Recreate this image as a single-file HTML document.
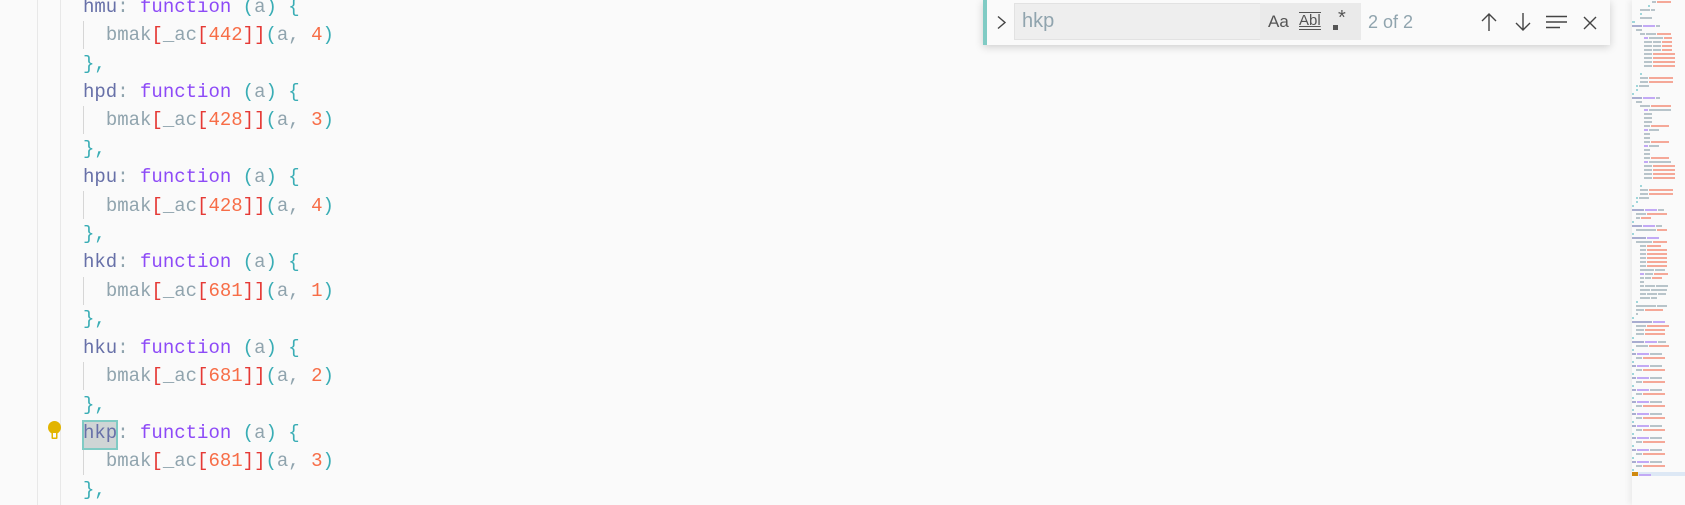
<!DOCTYPE html>
<html><head><meta charset="utf-8"><style>
html,body{margin:0;padding:0;width:1685px;height:505px;overflow:hidden;background:#fafafa;}
body{position:relative;font-family:"Liberation Mono","DejaVu Sans Mono",monospace;}
.code{position:absolute;left:83px;top:-7.2px;font-size:19px;line-height:28.4px;white-space:pre;color:#90a4ae;letter-spacing:0px;}
.id{color:#6770a8}.kw{color:#8d4af7}.p{color:#39adb5}.r{color:#e53935}.n{color:#f76d47}.g{color:#90a4ae}
.gl{position:absolute;left:37px;top:0;width:1px;height:505px;background:#e8e8e8}
.gl2{position:absolute;left:60px;top:0;width:1px;height:505px;background:#e8e8e8}
.guide{position:absolute;left:83px;width:1px;background:#d6d6d6;height:28px}
.sel{position:absolute;left:83px;top:420px;width:32px;height:26px;background:#cfd5d5;border:2px solid #80cbc4;box-sizing:content-box;margin-left:-1px}
.find{position:absolute;left:983px;top:0;width:627px;height:45px;background:#fafafa;box-shadow:0 2px 8px rgba(0,0,0,0.18);border-left:4px solid #80cbc4;box-sizing:border-box;font-family:"Liberation Sans","DejaVu Sans",sans-serif}
.inp{position:absolute;left:27px;top:3px;width:347px;height:37px;background:#eeeeee;border:1px solid #e2e2e2;box-sizing:border-box}
.mm{position:absolute;left:1632px;top:0;width:53px;height:505px;background:#fafafa;box-shadow:-3px 0 6px rgba(0,0,0,0.06);overflow:hidden}
.mm div{height:4px;position:relative;white-space:nowrap;font-size:0}
.mm i{display:inline-block;height:2px;margin-top:1px;margin-right:1px}
.a{background:#b8c4ca}.b{background:#c2a9f5}.c{background:#f5a898}.d{background:#9fd6da}.e{background:#a9add0}
</style></head><body>
<div class="gl"></div><div class="gl2"></div>
<div class="guide" style="top:21px"></div>
<div class="guide" style="top:106px"></div>
<div class="guide" style="top:191px"></div>
<div class="guide" style="top:277px"></div>
<div class="guide" style="top:362px"></div>
<div class="guide" style="top:447px"></div>
<div class="sel"></div>
<svg style="position:absolute;left:47px;top:421px" width="15" height="20" viewBox="0 0 15 20"><circle cx="7.5" cy="6.5" r="6.5" fill="#e2b400"/><rect x="4.5" y="10" width="6" height="8" rx="1" fill="#e2b400"/><rect x="6" y="12" width="3" height="4.5" fill="#fafafa"/></svg>
<div class="code"><span class="id">hmu</span><span class="g">:</span> <span class="kw">function</span> <span class="p">(</span><span class="g">a</span><span class="p">)</span> <span class="p">{</span>
  <span class="g">bmak</span><span class="r">[</span><span class="g">_ac</span><span class="r">[</span><span class="n">442</span><span class="r">]]</span><span class="p">(</span><span class="g">a,</span> <span class="n">4</span><span class="p">)</span>
<span class="p">},</span>
<span class="id">hpd</span><span class="g">:</span> <span class="kw">function</span> <span class="p">(</span><span class="g">a</span><span class="p">)</span> <span class="p">{</span>
  <span class="g">bmak</span><span class="r">[</span><span class="g">_ac</span><span class="r">[</span><span class="n">428</span><span class="r">]]</span><span class="p">(</span><span class="g">a,</span> <span class="n">3</span><span class="p">)</span>
<span class="p">},</span>
<span class="id">hpu</span><span class="g">:</span> <span class="kw">function</span> <span class="p">(</span><span class="g">a</span><span class="p">)</span> <span class="p">{</span>
  <span class="g">bmak</span><span class="r">[</span><span class="g">_ac</span><span class="r">[</span><span class="n">428</span><span class="r">]]</span><span class="p">(</span><span class="g">a,</span> <span class="n">4</span><span class="p">)</span>
<span class="p">},</span>
<span class="id">hkd</span><span class="g">:</span> <span class="kw">function</span> <span class="p">(</span><span class="g">a</span><span class="p">)</span> <span class="p">{</span>
  <span class="g">bmak</span><span class="r">[</span><span class="g">_ac</span><span class="r">[</span><span class="n">681</span><span class="r">]]</span><span class="p">(</span><span class="g">a,</span> <span class="n">1</span><span class="p">)</span>
<span class="p">},</span>
<span class="id">hku</span><span class="g">:</span> <span class="kw">function</span> <span class="p">(</span><span class="g">a</span><span class="p">)</span> <span class="p">{</span>
  <span class="g">bmak</span><span class="r">[</span><span class="g">_ac</span><span class="r">[</span><span class="n">681</span><span class="r">]]</span><span class="p">(</span><span class="g">a,</span> <span class="n">2</span><span class="p">)</span>
<span class="p">},</span>
<span class="id">hkp</span><span class="g">:</span> <span class="kw">function</span> <span class="p">(</span><span class="g">a</span><span class="p">)</span> <span class="p">{</span>
  <span class="g">bmak</span><span class="r">[</span><span class="g">_ac</span><span class="r">[</span><span class="n">681</span><span class="r">]]</span><span class="p">(</span><span class="g">a,</span> <span class="n">3</span><span class="p">)</span>
<span class="p">},</span></div>

<div class="find">
<svg style="position:absolute;left:9px;top:15px" width="12" height="15" viewBox="0 0 12 15"><path d="M2 1.5 L9 7.5 L2 13.5" fill="none" stroke="#444" stroke-width="1.4"/></svg>
<div class="inp">
<div style="position:absolute;left:7px;top:6px;font-size:20px;color:#90a4ae">hkp</div>
<div style="position:absolute;left:245px;top:-1px;width:101px;height:37px;background:#eaeaea"></div>
<div style="position:absolute;left:253px;top:8px;font-size:17px;color:#555">Aa</div>
<div style="position:absolute;left:284px;top:8px;font-size:15px;color:#555;border-top:1.5px solid #555;border-bottom:1.5px solid #555;line-height:16px;text-decoration:underline">Abl</div>
<div style="position:absolute;left:318px;top:21px;width:5px;height:5px;background:#555"></div>
<div style="position:absolute;left:323px;top:3px;font-size:20px;color:#555">*</div>
</div>
<div style="position:absolute;left:381px;top:12px;font-size:18px;color:#90a4ae">2 of 2</div>
<svg style="position:absolute;left:492px;top:12px" width="20" height="20" viewBox="0 0 20 20"><path d="M10 19 V2 M3 9 L10 2 L17 9" fill="none" stroke="#444" stroke-width="1.4"/></svg>
<svg style="position:absolute;left:526px;top:12px" width="20" height="20" viewBox="0 0 20 20"><path d="M10 1 V18 M3 11 L10 18 L17 11" fill="none" stroke="#444" stroke-width="1.4"/></svg>
<svg style="position:absolute;left:558px;top:14px" width="24" height="16" viewBox="0 0 24 16"><path d="M1 2.5 H22 M1 8 H22 M1 13.5 H15" fill="none" stroke="#444" stroke-width="1.4"/></svg>
<svg style="position:absolute;left:596px;top:16px" width="14" height="14" viewBox="0 0 14 14"><path d="M1 1 L13 13 M13 1 L1 13" fill="none" stroke="#444" stroke-width="1.4"/></svg>
</div>

<div class="mm">
<div><i class="a" style="width:4px;margin-left:20px"></i><i class="c" style="width:14px"></i></div>
<div><i class="d" style="width:2px;margin-left:16px"></i></div>
<div><i class="a" style="width:10px;margin-left:8px"></i><i class="a" style="width:4px"></i></div>
<div><i class="d" style="width:2px;margin-left:8px"></i></div>
<div><i class="a" style="width:12px;margin-left:8px"></i></div>
<div><i class="d" style="width:3px;margin-left:0px"></i></div>
<div><i class="e" style="width:10px"></i><i class="b" style="width:12px"></i><i class="a" style="width:4px"></i></div>
<div><i class="a" style="width:6px;margin-left:4px"></i></div>
<div><i class="a" style="width:5px;margin-left:8px"></i><i class="a" style="width:10px"></i><i class="c" style="width:14px"></i></div>
<div><i class="b" style="width:4px;margin-left:12px"></i><i class="a" style="width:14px"></i><i class="c" style="width:8px"></i></div>
<div><i class="a" style="width:8px;margin-left:12px"></i><i class="a" style="width:8px"></i><i class="c" style="width:10px"></i></div>
<div><i class="a" style="width:8px;margin-left:12px"></i><i class="a" style="width:8px"></i><i class="c" style="width:10px"></i></div>
<div><i class="a" style="width:8px;margin-left:12px"></i><i class="a" style="width:8px"></i><i class="c" style="width:10px"></i></div>
<div><i class="a" style="width:8px;margin-left:12px"></i><i class="c" style="width:22px"></i></div>
<div><i class="a" style="width:8px;margin-left:12px"></i><i class="c" style="width:22px"></i></div>
<div><i class="a" style="width:8px;margin-left:12px"></i><i class="c" style="width:22px"></i></div>
<div><i class="a" style="width:8px;margin-left:12px"></i><i class="c" style="width:22px"></i></div>
<div></div>
<div><i class="d" style="width:2px;margin-left:8px"></i></div>
<div><i class="a" style="width:8px;margin-left:8px"></i><i class="c" style="width:24px"></i></div>
<div><i class="a" style="width:8px;margin-left:8px"></i><i class="c" style="width:24px"></i></div>
<div><i class="d" style="width:2px;margin-left:4px"></i><i class="a" style="width:10px"></i></div>
<div><i class="d" style="width:2px;margin-left:4px"></i></div>
<div><i class="d" style="width:2px"></i></div>
<div><i class="e" style="width:10px"></i><i class="b" style="width:12px"></i><i class="a" style="width:4px"></i></div>
<div><i class="a" style="width:6px;margin-left:4px"></i></div>
<div><i class="a" style="width:10px;margin-left:8px"></i><i class="c" style="width:20px"></i></div>
<div><i class="b" style="width:4px;margin-left:12px"></i><i class="a" style="width:22px"></i></div>
<div><i class="a" style="width:8px;margin-left:12px"></i></div>
<div><i class="a" style="width:8px;margin-left:12px"></i></div>
<div><i class="a" style="width:8px;margin-left:12px"></i></div>
<div><i class="a" style="width:6px;margin-left:12px"></i><i class="c" style="width:18px"></i></div>
<div><i class="b" style="width:4px;margin-left:12px"></i><i class="a" style="width:10px"></i></div>
<div><i class="a" style="width:6px;margin-left:12px"></i></div>
<div><i class="a" style="width:6px;margin-left:12px"></i></div>
<div><i class="a" style="width:6px;margin-left:12px"></i><i class="c" style="width:18px"></i></div>
<div><i class="b" style="width:4px;margin-left:12px"></i><i class="a" style="width:10px"></i></div>
<div><i class="a" style="width:6px;margin-left:12px"></i></div>
<div><i class="a" style="width:6px;margin-left:12px"></i></div>
<div><i class="a" style="width:6px;margin-left:12px"></i><i class="c" style="width:18px"></i></div>
<div><i class="b" style="width:4px;margin-left:12px"></i><i class="a" style="width:22px"></i></div>
<div><i class="a" style="width:8px;margin-left:12px"></i><i class="c" style="width:22px"></i></div>
<div><i class="a" style="width:8px;margin-left:12px"></i><i class="c" style="width:22px"></i></div>
<div><i class="a" style="width:8px;margin-left:12px"></i><i class="c" style="width:22px"></i></div>
<div><i class="a" style="width:8px;margin-left:12px"></i><i class="c" style="width:22px"></i></div>
<div></div>
<div><i class="d" style="width:2px;margin-left:8px"></i></div>
<div><i class="a" style="width:8px;margin-left:8px"></i><i class="c" style="width:24px"></i></div>
<div><i class="a" style="width:8px;margin-left:8px"></i><i class="c" style="width:24px"></i></div>
<div><i class="d" style="width:2px;margin-left:4px"></i><i class="a" style="width:10px"></i></div>
<div><i class="d" style="width:2px;margin-left:4px"></i></div>
<div><i class="d" style="width:2px"></i></div>
<div><i class="e" style="width:12px"></i><i class="b" style="width:12px"></i><i class="a" style="width:6px"></i></div>
<div><i class="a" style="width:10px;margin-left:4px"></i><i class="c" style="width:20px"></i></div>
<div><i class="a" style="width:4px;margin-left:4px"></i><i class="c" style="width:10px"></i></div>
<div><i class="d" style="width:2px"></i></div>
<div><i class="e" style="width:10px"></i><i class="b" style="width:12px"></i><i class="a" style="width:6px"></i></div>
<div><i class="a" style="width:20px;margin-left:4px"></i><i class="c" style="width:10px"></i></div>
<div><i class="d" style="width:2px"></i></div>
<div><i class="e" style="width:14px"></i><i class="b" style="width:12px"></i></div>
<div><i class="a" style="width:16px;margin-left:4px"></i><i class="c" style="width:14px"></i></div>
<div><i class="a" style="width:6px;margin-left:8px"></i><i class="c" style="width:14px"></i></div>
<div><i class="a" style="width:6px;margin-left:8px"></i><i class="c" style="width:20px"></i></div>
<div><i class="a" style="width:6px;margin-left:8px"></i><i class="c" style="width:20px"></i></div>
<div><i class="a" style="width:6px;margin-left:8px"></i><i class="c" style="width:20px"></i></div>
<div><i class="a" style="width:6px;margin-left:8px"></i><i class="c" style="width:20px"></i></div>
<div><i class="a" style="width:6px;margin-left:8px"></i><i class="c" style="width:20px"></i></div>
<div><i class="a" style="width:14px;margin-left:8px"></i><i class="a" style="width:10px"></i></div>
<div><i class="b" style="width:4px;margin-left:8px"></i><i class="a" style="width:8px"></i><i class="c" style="width:14px"></i></div>
<div><i class="a" style="width:4px;margin-left:8px"></i><i class="a" style="width:6px"></i><i class="c" style="width:10px"></i></div>
<div><i class="a" style="width:4px;margin-left:8px"></i></div>
<div><i class="a" style="width:4px;margin-left:8px"></i><i class="a" style="width:10px"></i><i class="a" style="width:12px"></i></div>
<div><i class="a" style="width:10px;margin-left:8px"></i><i class="a" style="width:16px"></i></div>
<div><i class="a" style="width:6px;margin-left:8px"></i><i class="a" style="width:10px"></i><i class="a" style="width:8px"></i></div>
<div><i class="a" style="width:10px;margin-left:8px"></i><i class="a" style="width:6px"></i></div>
<div><i class="d" style="width:2px;margin-left:4px"></i></div>
<div><i class="a" style="width:20px;margin-left:4px"></i><i class="a" style="width:10px"></i></div>
<div><i class="a" style="width:8px;margin-left:4px"></i><i class="c" style="width:18px"></i></div>
<div><i class="a" style="width:2px;margin-left:4px"></i></div>
<div><i class="d" style="width:2px"></i></div>
<div><i class="e" style="width:20px"></i><i class="b" style="width:12px"></i></div>
<div><i class="a" style="width:10px;margin-left:4px"></i><i class="c" style="width:22px"></i></div>
<div><i class="a" style="width:8px;margin-left:4px"></i><i class="c" style="width:20px"></i></div>
<div><i class="a" style="width:8px;margin-left:4px"></i><i class="c" style="width:20px"></i></div>
<div><i class="d" style="width:2px"></i></div>
<div><i class="e" style="width:12px"></i><i class="b" style="width:12px"></i><i class="a" style="width:8px"></i></div>
<div><i class="a" style="width:12px;margin-left:4px"></i><i class="c" style="width:20px"></i></div>
<div><i class="d" style="width:2px"></i></div>
<div><i class="e" style="width:4px"></i><i class="b" style="width:12px"></i><i class="a" style="width:12px"></i></div>
<div><i class="a" style="width:6px;margin-left:4px"></i><i class="c" style="width:22px"></i></div>
<div><i class="d" style="width:2px"></i></div>
<div><i class="e" style="width:4px"></i><i class="b" style="width:12px"></i><i class="a" style="width:12px"></i></div>
<div><i class="a" style="width:6px;margin-left:4px"></i><i class="c" style="width:22px"></i></div>
<div><i class="d" style="width:2px"></i></div>
<div><i class="e" style="width:4px"></i><i class="b" style="width:12px"></i><i class="a" style="width:12px"></i></div>
<div><i class="a" style="width:6px;margin-left:4px"></i><i class="c" style="width:22px"></i></div>
<div><i class="d" style="width:2px"></i></div>
<div><i class="e" style="width:4px"></i><i class="b" style="width:12px"></i><i class="a" style="width:12px"></i></div>
<div><i class="a" style="width:6px;margin-left:4px"></i><i class="c" style="width:22px"></i></div>
<div><i class="d" style="width:2px"></i></div>
<div><i class="e" style="width:4px"></i><i class="b" style="width:12px"></i><i class="a" style="width:12px"></i></div>
<div><i class="a" style="width:6px;margin-left:4px"></i><i class="c" style="width:22px"></i></div>
<div><i class="d" style="width:2px"></i></div>
<div><i class="e" style="width:4px"></i><i class="b" style="width:12px"></i><i class="a" style="width:12px"></i></div>
<div><i class="a" style="width:6px;margin-left:4px"></i><i class="c" style="width:22px"></i></div>
<div><i class="d" style="width:2px"></i></div>
<div><i class="e" style="width:4px"></i><i class="b" style="width:12px"></i><i class="a" style="width:12px"></i></div>
<div><i class="a" style="width:6px;margin-left:4px"></i><i class="c" style="width:22px"></i></div>
<div><i class="d" style="width:2px"></i></div>
<div><i class="e" style="width:4px"></i><i class="b" style="width:12px"></i><i class="a" style="width:12px"></i></div>
<div><i class="a" style="width:6px;margin-left:4px"></i><i class="c" style="width:22px"></i></div>
<div><i class="d" style="width:2px"></i></div>
<div><i class="e" style="width:4px"></i><i class="b" style="width:12px"></i><i class="a" style="width:12px"></i></div>
<div><i class="a" style="width:6px;margin-left:4px"></i><i class="c" style="width:22px"></i></div>
<div><i class="d" style="width:2px"></i></div>
<div><i class="e" style="width:4px"></i><i class="b" style="width:12px"></i><i class="a" style="width:12px"></i></div>
<div><i class="a" style="width:6px;margin-left:4px"></i><i class="c" style="width:22px"></i></div>
<div><i class="d" style="width:2px"></i></div>
<div style="background:#dde8f5"><i style="width:6px;height:4px;margin-top:0;background:#d08a10"></i><i class="b" style="width:12px"></i></div>
</div>
</body></html>
